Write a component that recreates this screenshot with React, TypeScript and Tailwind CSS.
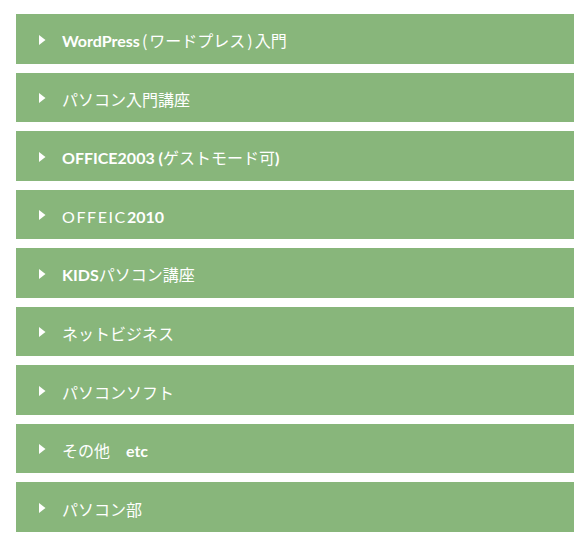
import React from 'react';

interface MenuItem {
  id: string;
  label: React.ReactNode;
}

const latin = "font-['Lato','Noto_Sans',sans-serif] font-bold";

const items: MenuItem[] = [
  { id: 'wp', label: <><span className={latin}>WordPress</span><span className="mx-[2px]">(</span>ワードプレス<span className="mx-[2px]">)</span>入門</> },
  { id: 'pc', label: 'パソコン入門講座' },
  { id: 'o2003', label: <><span className={latin}>OFFICE2003 (</span>ゲストモード可<span className={latin}>)</span></> },
  { id: 'o2010', label: <><span className="font-['Lato',sans-serif] tracking-[0.1em]">OFFEIC</span><span className={latin}>2010</span></> },
  { id: 'kids', label: <><span className={latin}>KIDS</span>パソコン講座</> },
  { id: 'net', label: 'ネットビジネス' },
  { id: 'soft', label: 'パソコンソフト' },
  { id: 'etc', label: <>その他　<span className={latin}>etc</span></> },
  { id: 'club', label: 'パソコン部' },
];

const App: React.FC = () => {
  return (
    <div className="min-h-screen bg-white pt-[14px] pl-[16px] pr-[7px]">
      <ul className="flex flex-col gap-[9px]">
        {items.map((item) => (
          <li
            key={item.id}
            className="h-[49.5px] bg-[#88b67b] flex items-center pl-[23px] pt-[4px] text-white text-[16px] font-['Noto_Sans_CJK_JP',sans-serif]"
          >
            <svg width="7" height="10" viewBox="0 0 7 10" className="mr-[16px] -mt-[2px]">
              <polygon points="0,0 6.5,5 0,10" fill="#ffffff" />
            </svg>
            <span className="leading-none">{item.label}</span>
          </li>
        ))}
      </ul>
    </div>
  );
};

export default App;
